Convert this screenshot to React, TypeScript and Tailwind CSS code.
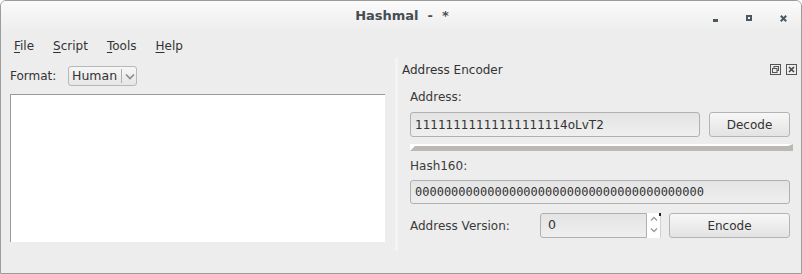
import React from 'react'

const font = { fontFamily: '"DejaVu Sans", "Liberation Sans", sans-serif' }

function Mnemonic({ first, rest }: { first: string; rest: string }) {
  return (
    <span>
      <span className="underline underline-offset-[2px] decoration-[1px]">{first}</span>
      {rest}
    </span>
  )
}

function Button({ label, className }: { label: string; className: string }) {
  return (
    <div
      className={`flex items-center justify-center rounded-[3px] border border-[#b4b4b4] bg-gradient-to-b from-[#f7f7f7] to-[#e3e3e3] text-[12px] text-[#333] ${className}`}
    >
      {label}
    </div>
  )
}

function LineEdit({ value, mono, className }: { value: string; mono?: boolean; className: string }) {
  return (
    <div
      className={`flex items-center rounded-[3px] border border-[#b0b0b0] bg-gradient-to-b from-[#e4e4e4] to-[#efefef] pl-[4px] text-[#333] ${className}`}
      style={mono ? { fontFamily: '"DejaVu Sans Mono", "Liberation Mono", monospace', fontSize: 12 } : { fontSize: 12 }}
    >
      {value}
    </div>
  )
}

export default function App() {
  return (
    <div
      className="flex h-[274px] w-[802px] flex-col overflow-hidden rounded-t-[6px] border border-[#9c9c9c] bg-[#ededed] text-[12px] text-[#3a3a3a]"
      style={font}
    >
      {/* title bar */}
      <div className="grid h-[32px] shrink-0 grid-cols-[1fr_auto_1fr] items-center bg-gradient-to-b from-[#fbfbfb] to-[#ececec] pb-[2px]">
        <div />
        <div className="whitespace-pre pl-[2px] text-[13px] font-bold text-[#454d53]">Hashmal  -  *</div>
        <div className="flex items-center justify-end gap-[28px] pr-[14px] pt-[4px]">
          <div className="mt-[5px] h-[3px] w-[5px] bg-[#4a5862]" />
          <div className="h-[6px] w-[6px] border-[2px] border-[#4a5862]" />
          <svg width="7" height="7" viewBox="0 0 7 7">
            <path d="M0.8 0.8 L6.2 6.2 M6.2 0.8 L0.8 6.2" stroke="#4a5862" strokeWidth="2" />
          </svg>
        </div>
      </div>

      {/* menu bar */}
      <div className="flex h-[25px] shrink-0 items-center gap-[19px] pl-[13px] text-[12px] text-[#333]">
        <Mnemonic first="F" rest="ile" />
        <Mnemonic first="S" rest="cript" />
        <Mnemonic first="T" rest="ools" />
        <Mnemonic first="H" rest="elp" />
      </div>

      <div className="flex flex-1">
        {/* left pane */}
        <div className="flex w-[386px] flex-col pl-[9px] pt-[8px]">
          <div className="flex h-[20px] items-center">
            <span className="w-[58px] text-[#333]">Format:</span>
            <div className="flex h-[20px] w-[69px] items-center rounded-[3px] border border-[#b8b8b8] bg-gradient-to-b from-[#f6f6f6] to-[#e6e6e6] pl-[3px]">
              <span className="text-[12.5px] text-[#333]">Human</span>
              <div className="ml-[4px] h-[14px] w-px bg-[#b0b0b0]" />
              <svg className="ml-[3px]" width="10" height="7" viewBox="0 0 10 7">
                <path d="M1 1.5 L5 5.5 L9 1.5" fill="none" stroke="#8a8a8a" strokeWidth="1.6" />
              </svg>
            </div>
          </div>
          <div className="mt-[8px] h-[148px] w-[375px] border-l border-t border-[#9a9a9a] bg-white" />
        </div>

        {/* splitter */}
        <div className="ml-[8px] h-[193px] w-[3px] bg-[radial-gradient(circle,#fbfbfb_45%,transparent_55%)] bg-[length:2px_2px]" />

        {/* dock */}
        <div className="ml-[3px] flex flex-1 flex-col">
          <div className="flex h-[23px] items-center justify-between pl-[1px] pr-[4px]">
            <span className="text-[12px] text-[#333]">Address Encoder</span>
            <div className="flex items-center gap-[5px]">
              <svg width="11" height="11" viewBox="0 0 11 11">
                <rect x="0.5" y="0.5" width="10" height="10" fill="none" stroke="#555" />
                <rect x="4" y="2.5" width="4.5" height="4" fill="none" stroke="#555" />
                <rect x="2.5" y="4.5" width="4.5" height="4" fill="#ededed" stroke="#555" />
              </svg>
              <svg width="11" height="11" viewBox="0 0 11 11">
                <rect x="0.5" y="0.5" width="10" height="10" fill="none" stroke="#555" />
                <path d="M3 3 L8 8 M8 3 L3 8" stroke="#444" strokeWidth="1.6" />
              </svg>
            </div>
          </div>

          <div className="flex w-[389px] flex-col pl-[9px]">
            <div className="mt-[9px] h-[14px] leading-[14px]">Address:</div>
            <div className="mt-[8px] flex h-[25px] gap-[9px]">
              <LineEdit value="11111111111111111114oLvT2" className="w-[290px]" />
              <Button label="Decode" className="flex-1" />
            </div>
            <div className="mt-[7px] h-0 w-[383px] border-b-[5px] border-l-[5px] border-r-[5px] border-t-[2px] border-b-[#bcb8b4] border-l-white border-r-[#bcb8b4] border-t-white" />
            <div className="mt-[8px] h-[14px] leading-[14px]">Hash160:</div>
            <LineEdit value="0000000000000000000000000000000000000000" mono className="mt-[7px] h-[24px] w-full" />
            <div className="mt-[9px] flex h-[25px] items-center">
              <span className="w-[130px]">Address Version:</span>
              <div className="flex h-[25px] w-[107px] items-center rounded-l-[3px] border border-[#b0b0b0] bg-gradient-to-b from-[#e4e4e4] to-[#efefef] pl-[7px] text-[12.5px] text-[#333]">
                0
              </div>
              <div className="relative flex h-[25px] w-[14px] flex-col border-r border-r-[#d0d0d0] bg-white">
                <div className="absolute right-[-1px] top-0 h-[3px] w-[2px] bg-[#222]" />
                <svg className="mt-[2px] ml-[3px]" width="8" height="8" viewBox="0 0 8 8">
                  <path d="M1 5.5 L4 2.5 L7 5.5" fill="none" stroke="#999" strokeWidth="1.3" />
                </svg>
                <svg className="mt-[3px] ml-[3px]" width="8" height="8" viewBox="0 0 8 8">
                  <path d="M1 2.5 L4 5.5 L7 2.5" fill="none" stroke="#999" strokeWidth="1.3" />
                </svg>
              </div>
              <Button label="Encode" className="ml-[8px] h-[25px] flex-1" />
            </div>
          </div>
        </div>
      </div>
    </div>
  )
}
